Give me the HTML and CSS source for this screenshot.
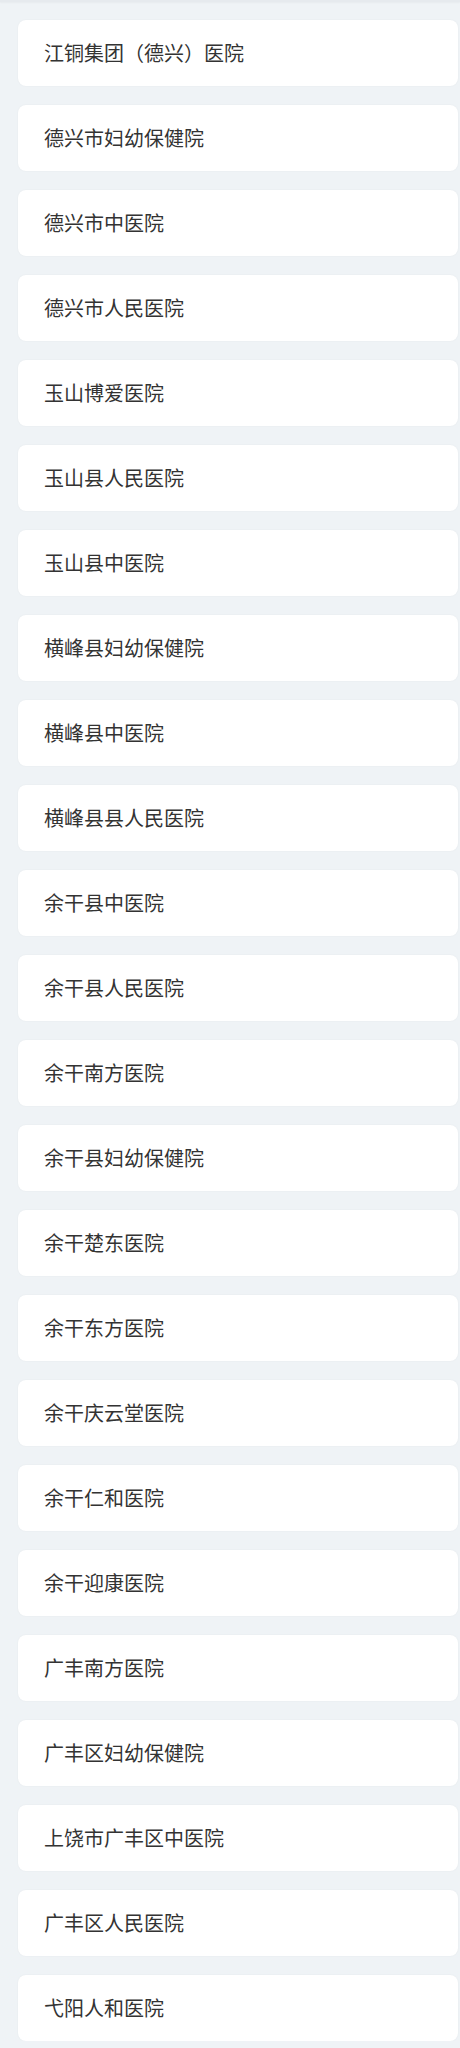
FILE: index.html
```html
<!DOCTYPE html>
<html lang="zh-CN">
<head>
<meta charset="utf-8">
<title>医院列表</title>
<link rel="stylesheet" href="styles.css">
</head>
<body>
<div class="topbar"></div>
<ul class="list">
  <li class="card">江铜集团（德兴）医院</li>
  <li class="card">德兴市妇幼保健院</li>
  <li class="card">德兴市中医院</li>
  <li class="card">德兴市人民医院</li>
  <li class="card">玉山博爱医院</li>
  <li class="card">玉山县人民医院</li>
  <li class="card">玉山县中医院</li>
  <li class="card">横峰县妇幼保健院</li>
  <li class="card">横峰县中医院</li>
  <li class="card">横峰县县人民医院</li>
  <li class="card">余干县中医院</li>
  <li class="card">余干县人民医院</li>
  <li class="card">余干南方医院</li>
  <li class="card">余干县妇幼保健院</li>
  <li class="card">余干楚东医院</li>
  <li class="card">余干东方医院</li>
  <li class="card">余干庆云堂医院</li>
  <li class="card">余干仁和医院</li>
  <li class="card">余干迎康医院</li>
  <li class="card">广丰南方医院</li>
  <li class="card">广丰区妇幼保健院</li>
  <li class="card">上饶市广丰区中医院</li>
  <li class="card">广丰区人民医院</li>
  <li class="card">弋阳人和医院</li>
</ul>
</body>
</html>
```
FILE: styles.css
```css
html, body {
  margin: 0;
  padding: 0;
  background: #eff3f6;
}
body {
  font-family: "Noto Sans CJK SC", "Noto Sans", sans-serif;
  color: #333;
}
.topbar {
  height: 2px;
  background: #e6eaee;
  box-shadow: 0 1px 2px rgba(0, 0, 0, 0.04);
}
.list {
  list-style: none;
  margin: 0;
  padding: 18px 2px 0 18px;
  display: flex;
  flex-direction: column;
  gap: 19px;
}
.card {
  height: 66px;
  box-sizing: border-box;
  background: #fff;
  border-radius: 8px;
  box-shadow: 0 0 2px rgba(0, 0, 0, 0.05);
  display: flex;
  align-items: center;
  padding-left: 26px;
  font-size: 20px;
  line-height: 1;
}
```
